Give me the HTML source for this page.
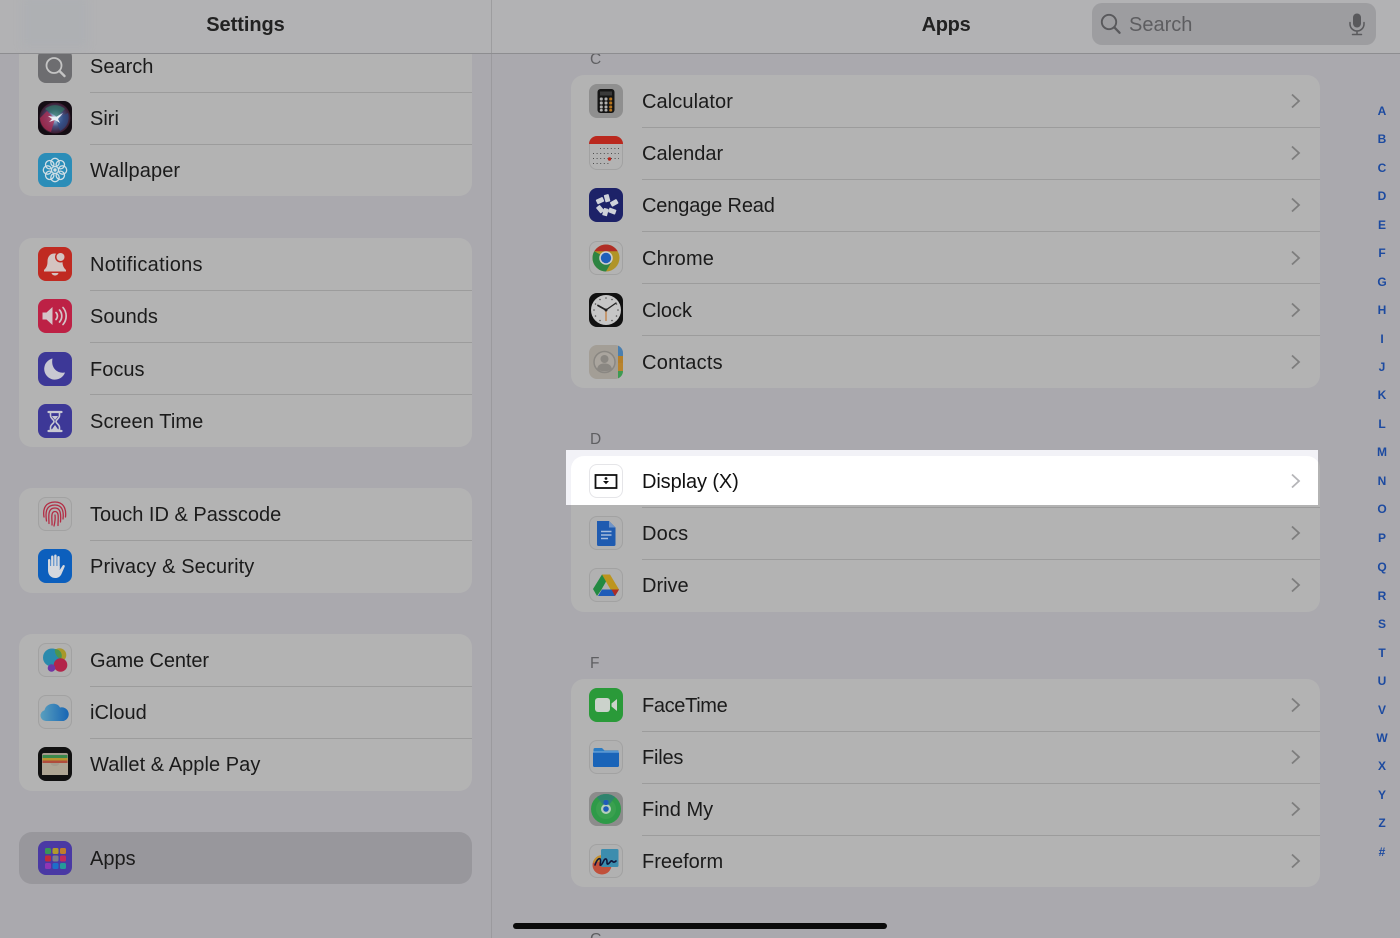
<!DOCTYPE html>
<html style="overflow:hidden;height:938px"><head><meta charset="utf-8"><style>
html,body{margin:0;padding:0}
body{width:1400px;height:938px;overflow:hidden;background:#aaa9ae;font-family:"Liberation Sans",sans-serif;color:#1c1c1c}
#w{position:relative;width:1400px;height:938px;overflow:hidden;background:#aaa9ae}
.a{position:absolute}
.card{position:absolute;background:#b3b3b3;border-radius:13px}
.sep{position:absolute;height:1px;background:#9c9c9c}
.t{position:absolute;font-size:20px;line-height:26px;white-space:nowrap;color:#1b1b1b;margin-top:1px}
.i{position:absolute;width:34px;height:34px;border-radius:8px;overflow:hidden}
.i svg,.ch{display:block}
.ch{position:absolute}
.h{position:absolute;font-size:12px;line-height:14px;font-weight:bold;color:#1c4aa0;width:20px;text-align:center}
.l{position:absolute;font-size:15.5px;line-height:18px;color:#5f5f62}
</style></head><body><div id="w">

<div class="card" style="left:19px;top:30px;width:453px;height:166px"></div>
<div class="card" style="left:19px;top:238px;width:453px;height:209px"></div>
<div class="card" style="left:19px;top:488px;width:453px;height:105px"></div>
<div class="card" style="left:19px;top:634px;width:453px;height:157px"></div>
<div class="card" style="left:19px;top:832px;width:453px;height:52px;background:#98979c"></div>
<div class="a" style="left:491px;top:0;width:1px;height:938px;background:#9b9a9e"></div>

<div class="sep" style="left:90px;top:92px;width:382px"></div>
<div class="sep" style="left:90px;top:144px;width:382px"></div>
<div class="sep" style="left:90px;top:290px;width:382px"></div>
<div class="sep" style="left:90px;top:342px;width:382px"></div>
<div class="sep" style="left:90px;top:394px;width:382px"></div>
<div class="sep" style="left:90px;top:540px;width:382px"></div>
<div class="sep" style="left:90px;top:686px;width:382px"></div>
<div class="sep" style="left:90px;top:738px;width:382px"></div>

<div class="t" style="left:90px;top:53px">Search</div>
<div class="t" style="left:90px;top:105px">Siri</div>
<div class="t" style="left:90px;top:157px;letter-spacing:.1px">Wallpaper</div>
<div class="t" style="left:90px;top:251px;letter-spacing:.3px">Notifications</div>
<div class="t" style="left:90px;top:303px">Sounds</div>
<div class="t" style="left:90px;top:356px">Focus</div>
<div class="t" style="left:90px;top:408px;letter-spacing:.1px">Screen Time</div>
<div class="t" style="left:90px;top:501px">Touch ID &amp; Passcode</div>
<div class="t" style="left:90px;top:553px;letter-spacing:.12px">Privacy &amp; Security</div>
<div class="t" style="left:90px;top:647px;letter-spacing:-.1px">Game Center</div>
<div class="t" style="left:90px;top:699px">iCloud</div>
<div class="t" style="left:90px;top:751px;letter-spacing:.06px">Wallet &amp; Apple Pay</div>
<div class="t" style="left:90px;top:845px">Apps</div>

<!-- left icons -->
<div class="i" style="left:38px;top:49px;background:#6d6d70"><svg width="34" height="34"><circle cx="16" cy="16.500" r="7.500" fill="none" stroke="#c4c4c4" stroke-width="1.800"/><path d="M21.500 22l5 5" stroke="#c4c4c4" stroke-width="2.400" stroke-linecap="round"/></svg></div>
<div class="i" style="left:38px;top:101px;background:#140d14"><svg width="34" height="34"><defs><radialGradient id="s1" cx="50%" cy="50%" r="50%"><stop offset="0" stop-color="#e8eef5"/><stop offset=".2" stop-color="#8fa9c9"/><stop offset=".55" stop-color="#47507f"/><stop offset="1" stop-color="#3c1b2e"/></radialGradient></defs><circle cx="17" cy="17" r="15.500" fill="url(#s1)"/><path d="M7 8a15 15 0 0 1 20 0l-8 8z" fill="#2f7a64" opacity=".65"/><path d="M2 17a15 15 0 0 0 11 14l4-13-8-8z" fill="#b02c50" opacity=".75"/><path d="M30 12a15 15 0 0 1-8 18l-4-12z" fill="#2a4f8a" opacity=".6"/><path d="M10 15l8 1 7-4-5 6 2 4-5-3-6 2 3-3z" fill="#e8eef5"/></svg></div>
<div class="i" style="left:38px;top:153px;background:#2b8db8"><svg width="34" height="34"><g fill="none" stroke="#cfdee5" stroke-width="1.300"><circle cx="17" cy="9.500" r="4.200"/><circle cx="17" cy="24.500" r="4.200"/><circle cx="9.500" cy="17" r="4.200"/><circle cx="24.500" cy="17" r="4.200"/><circle cx="11.700" cy="11.700" r="4.200"/><circle cx="22.300" cy="11.700" r="4.200"/><circle cx="11.700" cy="22.300" r="4.200"/><circle cx="22.300" cy="22.300" r="4.200"/></g><circle cx="17" cy="17" r="1.700" fill="#cfdee5"/></svg></div>

<div class="i" style="left:38px;top:247px;background:#c02a21"><svg width="34" height="34"><path d="M16.500 6.500c-5 0-7 4-7 8 0 4.500-1.500 6.500-3.500 8.500v1.500h22V23c-2-2-3.500-4-3.500-8.500 0-4-3-8-8-8z" fill="#d4c4c1"/><path d="M13.500 26h7c-.5 1.800-2 2.500-3.500 2.500s-3-.7-3.500-2.500z" fill="#d4c4c1"/><circle cx="22.500" cy="10" r="5.500" fill="#c02a21"/><circle cx="22.500" cy="10" r="4" fill="#d4c4c1"/></svg></div>
<div class="i" style="left:38px;top:299px;background:#bd2145"><svg width="34" height="34"><path d="M4.500 13.500h4l6-5.500v18l-6-5.500h-4z" fill="#d4c4c8"/><g fill="none" stroke="#d4c4c8" stroke-width="1.700" stroke-linecap="round"><path d="M18 13.500a5 5 0 0 1 0 7"/><path d="M21.500 11a9 9 0 0 1 0 12"/><path d="M25 8.500a13 13 0 0 1 0 17"/></g></svg></div>
<div class="i" style="left:38px;top:352px;background:#3d3897"><svg width="34" height="34"><path d="M14.500 6.500a10.700 10.700 0 1 0 12.500 14C20 22 12.500 16.500 14.500 6.500z" fill="#c8c8d2"/></svg></div>
<div class="i" style="left:38px;top:404px;background:#3d3897"><svg width="34" height="34"><path d="M10.500 8h13M10.500 27h13" stroke="#c8c8d2" stroke-width="2.200" stroke-linecap="round"/><path d="M12.500 9v2.500c0 3 3.500 4 3.500 6s-3.500 3-3.500 6V26h9v-2.500c0-3-3.500-4-3.500-6s3.500-3 3.500-6V9" fill="none" stroke="#c8c8d2" stroke-width="1.600"/><path d="M14 12h6c-.5 1.500-2 2.500-3 4-1-1.500-2.500-2.500-3-4zM17 21l3.500 5h-7z" fill="#c8c8d2"/></svg></div>

<div class="i" style="left:38px;top:497px;background:#b1b1b1;box-shadow:inset 0 0 0 1px #a2a2a2"><svg width="34" height="34"><g fill="none" stroke="#b32c44" stroke-width="1.300" stroke-linecap="round"><path d="M6 20c-1.500-9 2-15 11-15 8 0 11.500 6 10.500 15"/><path d="M8.500 24c-1-7-1.500-16 8.500-16 7 0 9 6 8 14"/><path d="M11 26.500c0-6-2-15.500 6-15.500 6 0 6 7 5.500 14"/><path d="M14 28c.5-4-2-13.500 3-13.500 4.500 0 3 7 3 14"/><path d="M17 18c.5 4 0 7-1 11"/></g></svg></div>
<div class="i" style="left:38px;top:549px;background:#0c5fbd"><svg width="34" height="34"><g fill="#d4d8de"><rect x="10" y="10" width="2.400" height="12" rx="1.200"/><rect x="13.100" y="6.500" width="2.400" height="14" rx="1.200"/><rect x="16.200" y="5.500" width="2.400" height="14" rx="1.200"/><rect x="19.300" y="7" width="2.400" height="14" rx="1.200"/><path d="M10 17h11.700v4l3-4.500c.8-1.200 2.600-.3 2 1.100L23.500 25c-1.300 2.800-3.500 4-6 4-4.500 0-7.500-3-7.500-8z"/></g></svg></div>

<div class="i" style="left:38px;top:643px;background:#b1b1b1;box-shadow:inset 0 0 0 1px #a2a2a2"><svg width="34" height="34"><circle cx="21.500" cy="12" r="6.800" fill="#a8982b"/><circle cx="14" cy="14.500" r="9" fill="#2a8aad"/><path d="M17 6a6.800 6.800 0 0 1 6 10 9 9 0 0 1-6-10z" fill="#4c9450"/><circle cx="22.500" cy="22" r="6.800" fill="#b3244a"/><circle cx="13.500" cy="25" r="3.800" fill="#6f37a6"/></svg></div>
<div class="i" style="left:38px;top:695px;background:#b1b1b1;box-shadow:inset 0 0 0 1px #a2a2a2"><svg width="34" height="34"><defs><linearGradient id="c1" x1="0" x2="1"><stop offset="0" stop-color="#5a9fbe"/><stop offset="1" stop-color="#1766b4"/></linearGradient></defs><path d="M8 26a5.500 5.500 0 0 1-1.500-10.800C8 8 19 6.500 22 12.500A6.800 6.800 0 0 1 25.500 26z" fill="url(#c1)"/></svg></div>
<div class="i" style="left:38px;top:747px;background:#111"><svg width="34" height="34"><rect x="4" y="6" width="26" height="22" rx="2" fill="#a49b8c"/><rect x="4.500" y="8" width="25" height="3" fill="#3b8a4b"/><rect x="4.500" y="11" width="25" height="2.500" fill="#b8942d"/><rect x="4.500" y="13.500" width="25" height="2.500" fill="#b04c3c"/><path d="M4 16h8.500c.7 4 8.300 4 9 0H30v12H4z" fill="#aea594"/></svg></div>

<div class="i" style="left:38px;top:841px;background:#4a39a4"><svg width="34" height="34"><rect x="7" y="7" width="6" height="6" rx="1.500" fill="#3b9557"/><rect x="14.500" y="7" width="6" height="6" rx="1.500" fill="#b19a2a"/><rect x="22" y="7" width="6" height="6" rx="1.500" fill="#c07d2b"/><rect x="7" y="14.500" width="6" height="6" rx="1.500" fill="#c22a3c"/><rect x="14.500" y="14.500" width="6" height="6" rx="1.500" fill="#7d7d88"/><rect x="22" y="14.500" width="6" height="6" rx="1.500" fill="#c22a5c"/><rect x="7" y="22" width="6" height="6" rx="1.500" fill="#8f35b5"/><rect x="14.500" y="22" width="6" height="6" rx="1.500" fill="#1d6fc9"/><rect x="22" y="22" width="6" height="6" rx="1.500" fill="#249a9a"/></svg></div>

<!-- right -->
<div class="l" style="left:590px;top:51px">C</div>
<div class="l" style="left:590px;top:431px">D</div>
<div class="l" style="left:590px;top:655px">F</div>
<div class="l" style="left:590px;top:931px">G</div>

<div class="card" style="left:571px;top:75px;width:749px;height:313px"></div>
<div class="card" style="left:571px;top:455px;width:749px;height:157px"></div>
<div class="card" style="left:571px;top:679px;width:749px;height:208px"></div>

<div class="a" style="left:566px;top:450px;width:752px;height:55px;background:#f2f2f7;overflow:hidden"><div style="position:absolute;left:5px;top:6px;width:749px;height:80px;background:#fff;border-radius:13px"></div></div>

<div class="sep" style="left:642px;top:127px;width:678px"></div>
<div class="sep" style="left:642px;top:179px;width:678px"></div>
<div class="sep" style="left:642px;top:231px;width:678px"></div>
<div class="sep" style="left:642px;top:283px;width:678px"></div>
<div class="sep" style="left:642px;top:335px;width:678px"></div>
<div class="sep" style="left:642px;top:507px;width:678px"></div>
<div class="sep" style="left:642px;top:559px;width:678px"></div>
<div class="sep" style="left:642px;top:731px;width:678px"></div>
<div class="sep" style="left:642px;top:783px;width:678px"></div>
<div class="sep" style="left:642px;top:835px;width:678px"></div>

<div class="t" style="left:642px;top:88px;letter-spacing:.1px">Calculator</div>
<div class="t" style="left:642px;top:140px">Calendar</div>
<div class="t" style="left:642px;top:192px;letter-spacing:-.15px">Cengage Read</div>
<div class="t" style="left:642px;top:245px;letter-spacing:.15px">Chrome</div>
<div class="t" style="left:642px;top:297px">Clock</div>
<div class="t" style="left:642px;top:349px;letter-spacing:.25px">Contacts</div>
<div class="t" style="left:642px;top:468px;color:#111;letter-spacing:-.1px">Display (X)</div>
<div class="t" style="left:642px;top:520px;letter-spacing:.2px">Docs</div>
<div class="t" style="left:642px;top:572px">Drive</div>
<div class="t" style="left:642px;top:692px;letter-spacing:-.35px">FaceTime</div>
<div class="t" style="left:642px;top:744px;letter-spacing:-.2px">Files</div>
<div class="t" style="left:642px;top:796px">Find My</div>
<div class="t" style="left:642px;top:848px">Freeform</div>

<!-- chevrons -->
<svg class="ch" style="left:1290px;top:93px" width="12" height="16"><path d="M2 1.500L9 8l-7 6.500" fill="none" stroke="#7d7d7d" stroke-width="1.800"/></svg>
<svg class="ch" style="left:1290px;top:145px" width="12" height="16"><path d="M2 1.500L9 8l-7 6.500" fill="none" stroke="#7d7d7d" stroke-width="1.800"/></svg>
<svg class="ch" style="left:1290px;top:197px" width="12" height="16"><path d="M2 1.500L9 8l-7 6.500" fill="none" stroke="#7d7d7d" stroke-width="1.800"/></svg>
<svg class="ch" style="left:1290px;top:250px" width="12" height="16"><path d="M2 1.500L9 8l-7 6.500" fill="none" stroke="#7d7d7d" stroke-width="1.800"/></svg>
<svg class="ch" style="left:1290px;top:302px" width="12" height="16"><path d="M2 1.500L9 8l-7 6.500" fill="none" stroke="#7d7d7d" stroke-width="1.800"/></svg>
<svg class="ch" style="left:1290px;top:354px" width="12" height="16"><path d="M2 1.500L9 8l-7 6.500" fill="none" stroke="#7d7d7d" stroke-width="1.800"/></svg>
<svg class="ch" style="left:1290px;top:473px" width="12" height="16"><path d="M2 1.500L9 8l-7 6.500" fill="none" stroke="#b5b5b8" stroke-width="1.800"/></svg>
<svg class="ch" style="left:1290px;top:525px" width="12" height="16"><path d="M2 1.500L9 8l-7 6.500" fill="none" stroke="#7d7d7d" stroke-width="1.800"/></svg>
<svg class="ch" style="left:1290px;top:577px" width="12" height="16"><path d="M2 1.500L9 8l-7 6.500" fill="none" stroke="#7d7d7d" stroke-width="1.800"/></svg>
<svg class="ch" style="left:1290px;top:697px" width="12" height="16"><path d="M2 1.500L9 8l-7 6.500" fill="none" stroke="#7d7d7d" stroke-width="1.800"/></svg>
<svg class="ch" style="left:1290px;top:749px" width="12" height="16"><path d="M2 1.500L9 8l-7 6.500" fill="none" stroke="#7d7d7d" stroke-width="1.800"/></svg>
<svg class="ch" style="left:1290px;top:801px" width="12" height="16"><path d="M2 1.500L9 8l-7 6.500" fill="none" stroke="#7d7d7d" stroke-width="1.800"/></svg>
<svg class="ch" style="left:1290px;top:853px" width="12" height="16"><path d="M2 1.500L9 8l-7 6.500" fill="none" stroke="#7d7d7d" stroke-width="1.800"/></svg>

<!-- right icons -->
<div class="i" style="left:589px;top:84px;background:#8f8f8f"><svg width="34" height="34"><rect x="8.500" y="5" width="17" height="24" rx="3" fill="#151515"/><rect x="11" y="7.500" width="12" height="4" fill="#3a3a3a"/><g fill="#b0b0b0"><rect x="10.800" y="13.500" width="3" height="3" rx="1"/><rect x="15.500" y="13.500" width="3" height="3" rx="1"/><rect x="10.800" y="17.500" width="3" height="3" rx="1"/><rect x="15.500" y="17.500" width="3" height="3" rx="1"/><rect x="10.800" y="21.500" width="3" height="3" rx="1"/><rect x="15.500" y="21.500" width="3" height="3" rx="1"/><rect x="10.800" y="25" width="3" height="2.500" rx="1"/><rect x="15.500" y="25" width="3" height="2.500" rx="1"/></g><g fill="#b8751d"><rect x="20.200" y="13.500" width="3" height="3" rx="1"/><rect x="20.200" y="17.500" width="3" height="3" rx="1"/><rect x="20.200" y="21.500" width="3" height="3" rx="1"/><rect x="20.200" y="25" width="3" height="2.500" rx="1"/></g></svg></div>
<div class="i" style="left:589px;top:136px;background:#b3b3b3;box-shadow:inset 0 0 0 1px #a2a2a2"><svg width="34" height="34"><rect width="34" height="8" fill="#ba281e"/><g fill="none" stroke="#4e4e4e" stroke-width="1" stroke-dasharray="1 2.600"><path d="M11 12.500h19M4 17.500h26M4 22.500h26M4 27.500h17"/></g><circle cx="20.500" cy="23" r="1.700" fill="#ba281e"/></svg></div>
<div class="i" style="left:589px;top:188px;background:#1d2268"><svg width="34" height="34"><g fill="#cfd2da"><rect x="7.500" y="10" width="7.500" height="5" rx=".8" transform="rotate(-25 11.500 13)"/><rect x="15.500" y="6.500" width="5" height="7.500" rx=".8" transform="rotate(-15 18 10)"/><rect x="21.500" y="12.500" width="7.500" height="5" rx=".8" transform="rotate(-30 25 15)"/><rect x="8.500" y="17.500" width="5" height="7.500" rx=".8" transform="rotate(-40 11 21)"/><rect x="14" y="20.500" width="5" height="7.500" rx=".8" transform="rotate(15 17 24)"/><rect x="19.500" y="20.500" width="7.500" height="5" rx=".8" transform="rotate(20 23 23)"/></g></svg></div>
<div class="i" style="left:589px;top:241px;background:#b3b3b3;box-shadow:inset 0 0 0 1px #a2a2a2"><svg width="34" height="34"><circle cx="17" cy="17" r="13.500" fill="#b09428"/><path d="M5.300 10.300A13.500 13.500 0 0 1 28.700 10.300H17z" fill="#b02d26"/><path d="M5.300 10.300A13.500 13.500 0 0 0 17 30.500L23 20z" fill="#2d8442"/><circle cx="17" cy="17" r="6.800" fill="#cdcdcd"/><circle cx="17" cy="17" r="5.200" fill="#1f5fba"/></svg></div>
<div class="i" style="left:589px;top:293px;background:#111"><svg width="34" height="34"><circle cx="17" cy="17" r="15" fill="#c6c6c6"/><g stroke="#222" stroke-linecap="round"><path d="M17 17L9 12.500" stroke-width="1.800"/><path d="M17 17L27 10" stroke-width="1.300"/></g><path d="M17 17v11" stroke="#c2691a" stroke-width="1"/><g fill="#555"><circle cx="17" cy="5" r=".8"/><circle cx="23" cy="6.500" r=".8"/><circle cx="27.500" cy="11" r=".8"/><circle cx="29" cy="17" r=".8"/><circle cx="27.500" cy="23" r=".8"/><circle cx="23" cy="27.500" r=".8"/><circle cx="11" cy="27.500" r=".8"/><circle cx="6.500" cy="23" r=".8"/><circle cx="5" cy="17" r=".8"/><circle cx="6.500" cy="11" r=".8"/><circle cx="11" cy="6.500" r=".8"/></g><circle cx="17" cy="17" r="1.500" fill="#222"/></svg></div>
<div class="i" style="left:589px;top:345px;background:#a39e96"><svg width="34" height="34"><rect x="29" y="0" width="5" height="11" fill="#4a7fb0"/><rect x="29" y="11" width="5" height="7" fill="#b5802a"/><rect x="29" y="18" width="5" height="8" fill="#b9842e"/><rect x="29" y="26" width="5" height="8" fill="#3f9a52"/><circle cx="15.500" cy="17" r="10.500" fill="#aaa59e" stroke="#8a8782" stroke-width="1.500"/><circle cx="15.500" cy="14" r="4" fill="#8a8782"/><path d="M8 24c1-4.500 4-5.500 7.500-5.500S22 19.500 23 24c-4 3-11 3-15 0z" fill="#8a8782"/></svg></div>

<div class="i" style="left:589px;top:464px;background:#fff;box-shadow:inset 0 0 0 1px #e5e5e8"><svg width="34" height="34"><rect x="6.500" y="11" width="21" height="13" fill="none" stroke="#111" stroke-width="1.800"/><path d="M14 17h6L17 20.300z" fill="#111"/><circle cx="17" cy="14.500" r="1.400" fill="#111"/></svg></div>
<div class="i" style="left:589px;top:516px;background:#b1b1b1;box-shadow:inset 0 0 0 1px #a2a2a2"><svg width="34" height="34"><path d="M8 5h12l6.500 6.500V28.500a1.500 1.500 0 0 1-1.500 1.500H9.500A1.500 1.500 0 0 1 8 28.500z" fill="#1f5bb0"/><path d="M20 5l6.500 6.500H20z" fill="#6f94c8"/><path d="M12 15.500h10.500M12 19h10.500M12 22.500h7" stroke="#a6bcdc" stroke-width="1.500"/></svg></div>
<div class="i" style="left:589px;top:568px;background:#b1b1b1;box-shadow:inset 0 0 0 1px #a2a2a2"><svg width="34" height="34"><path d="M13 6.500h8l-8.500 15-4.500 6.500-4-7z" fill="#238a42"/><path d="M21 6.500L30 21.500h-8.500L13 6.500z" fill="#bd951e"/><path d="M9 28l4-6.500h17l-4 6.500z" fill="#1f5cb8"/><path d="M30 21.500l-4 6.500-3.500-6.500z" fill="#b02d24"/></svg></div>

<div class="i" style="left:589px;top:688px;background:#2a9a39"><svg width="34" height="34"><rect x="6" y="10" width="15" height="14" rx="3" fill="#cbd2cb"/><path d="M22.500 15.500L28 11v12l-5.500-4.500z" fill="#cbd2cb"/></svg></div>
<div class="i" style="left:589px;top:740px;background:#b1b1b1;box-shadow:inset 0 0 0 1px #a2a2a2"><svg width="34" height="34"><path d="M4.500 11V9.500A1.500 1.500 0 0 1 6 8h7l2.500 2.500H29.500V12H4.500z" fill="#2c7cc4"/><rect x="4" y="12" width="26" height="15" rx="1.200" fill="#1a64b8"/><rect x="4" y="11.500" width="26" height="1" fill="#7fb2df"/></svg></div>
<div class="i" style="left:589px;top:792px;background:#8c8c8c"><svg width="34" height="34"><circle cx="17" cy="17" r="15" fill="#2e9a48"/><circle cx="17" cy="17" r="10" fill="#3aa04f"/><path d="M17 17L8 5a15 15 0 0 1 18 0z" fill="#2f7d78" opacity=".8"/><circle cx="17" cy="17" r="5" fill="#b5cebb"/><circle cx="17" cy="17" r="2.800" fill="#1f5cb8"/><rect x="14.500" y="8" width="5" height="5" rx="2" fill="#1f5cb8"/></svg></div>
<div class="i" style="left:589px;top:844px;background:#b1b1b1;box-shadow:inset 0 0 0 1px #a2a2a2"><svg width="34" height="34"><circle cx="13" cy="21" r="9.500" fill="#c1503a"/><path d="M4 19a9.500 9.500 0 0 1 9-8v6z" fill="#c29030"/><rect x="12" y="5" width="17.500" height="18" rx="1.500" fill="#3c8dae"/><path d="M6 21c2-6 5-8 5.500-5s-1.500 6 .5 5 3-7 5-6 0 6 2 5 3-4 4-3 2 2 4 0" fill="none" stroke="#10163a" stroke-width="1.600" stroke-linecap="round"/></svg></div>

<!-- index -->
<div class="h" style="left:1372px;top:104px">A</div>
<div class="h" style="left:1372px;top:132px">B</div>
<div class="h" style="left:1372px;top:161px">C</div>
<div class="h" style="left:1372px;top:189px">D</div>
<div class="h" style="left:1372px;top:218px">E</div>
<div class="h" style="left:1372px;top:246px">F</div>
<div class="h" style="left:1372px;top:275px">G</div>
<div class="h" style="left:1372px;top:303px">H</div>
<div class="h" style="left:1372px;top:332px">I</div>
<div class="h" style="left:1372px;top:360px">J</div>
<div class="h" style="left:1372px;top:388px">K</div>
<div class="h" style="left:1372px;top:417px">L</div>
<div class="h" style="left:1372px;top:445px">M</div>
<div class="h" style="left:1372px;top:474px">N</div>
<div class="h" style="left:1372px;top:502px">O</div>
<div class="h" style="left:1372px;top:531px">P</div>
<div class="h" style="left:1372px;top:560px">Q</div>
<div class="h" style="left:1372px;top:589px">R</div>
<div class="h" style="left:1372px;top:617px">S</div>
<div class="h" style="left:1372px;top:646px">T</div>
<div class="h" style="left:1372px;top:674px">U</div>
<div class="h" style="left:1372px;top:703px">V</div>
<div class="h" style="left:1372px;top:731px">W</div>
<div class="h" style="left:1372px;top:759px">X</div>
<div class="h" style="left:1372px;top:788px">Y</div>
<div class="h" style="left:1372px;top:816px">Z</div>
<div class="h" style="left:1372px;top:845px">#</div>

<!-- header -->
<div class="a" style="left:0;top:0;width:1400px;height:53px;background:#b2b2b4;overflow:hidden"><div class="a" style="left:22px;top:-4px;width:66px;height:52px;background:#aeb0b3;filter:blur(4px)"></div></div>
<div class="a" style="left:0;top:53px;width:1400px;height:1px;background:#8d8d90"></div>
<div class="a" style="left:491px;top:0;width:1px;height:53px;background:#9d9d9f"></div>
<div class="a" style="left:0;width:491px;top:13px;text-align:center;font-size:20px;line-height:24px;font-weight:bold;color:#222;letter-spacing:-.05px">Settings</div>
<div class="a" style="left:500px;width:892px;top:13px;text-align:center;font-size:20px;line-height:24px;font-weight:bold;color:#222;letter-spacing:-.3px">Apps</div>
<div class="a" style="left:1092px;top:3px;width:284px;height:42px;border-radius:10px;background:#9d9da0"></div>
<svg class="ch" style="left:1099px;top:12px" width="24" height="24"><circle cx="10" cy="10" r="7.200" fill="none" stroke="#59595c" stroke-width="1.900"/><path d="M15.300 15.300l5.300 5.500" stroke="#59595c" stroke-width="2.200" stroke-linecap="round"/></svg>
<div class="a" style="left:1129px;top:12px;font-size:20px;line-height:26px;color:#5d5d60">Search</div>
<svg class="ch" style="left:1346px;top:12px" width="22" height="24"><rect x="7" y="1.500" width="8" height="14" rx="4" fill="#59595c"/><path d="M4 10.500v1.500a7 7 0 0 0 14 0v-1.500M11 19v3M6.500 22.500h9" fill="none" stroke="#59595c" stroke-width="1.500" stroke-linecap="round"/></svg>

<div class="a" style="left:513px;top:923px;width:374px;height:6px;border-radius:3px;background:#0a0a0a"></div>
</div></body></html>
